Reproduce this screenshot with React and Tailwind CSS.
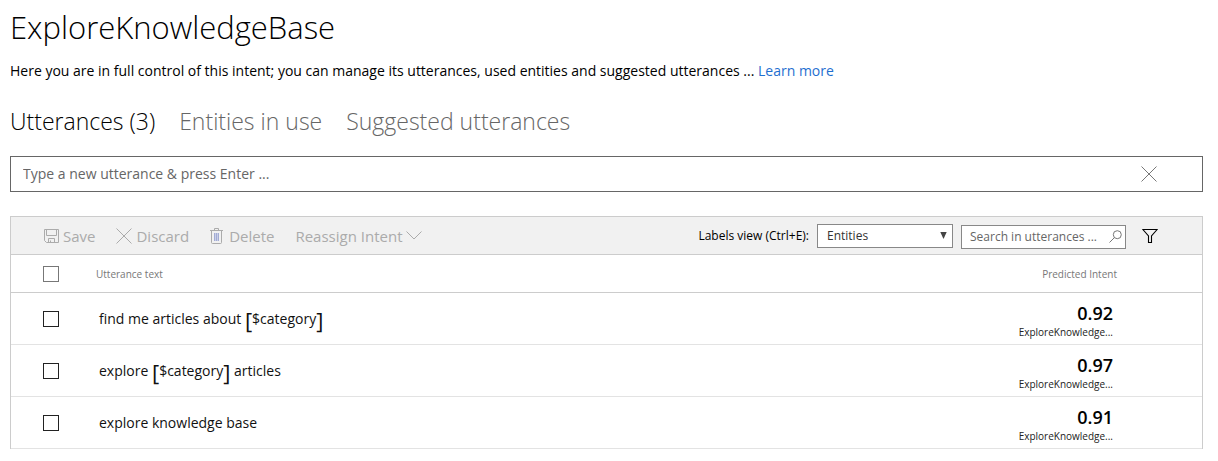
import { useState } from "react";

const rows = [
  { id: 1, before: "find me articles about ", entity: "$category", after: "", score: "0.92" },
  { id: 2, before: "explore ", entity: "$category", after: " articles", score: "0.97" },
  { id: 3, before: "explore knowledge base", entity: "", after: "", score: "0.91" },
];

function CrossIcon() {
  return (
    <svg className="size-4 shrink-0" viewBox="0 0 16 16" fill="none" stroke="currentColor" aria-hidden="true">
      <path d="M.5.5l15 15M15.5.5l-15 15" />
    </svg>
  );
}

function SaveIcon() {
  return (
    <svg className="h-4 w-[15px] shrink-0" viewBox="0 0 15 16" fill="none" stroke="currentColor" aria-hidden="true">
      <path d="M.5 1.5h14v13h-12l-2-2zM2.500 1.500v6h10v-6M4.500 14.500v-4h6v4M6.500 14.500v-2" />
    </svg>
  );
}

function TrashIcon() {
  return (
    <svg className="h-4 w-[13px] shrink-0" viewBox="0 0 13 16" fill="none" stroke="currentColor" aria-hidden="true">
      <path d="M0 2.500h13M4.500 2.500v-2h4v2M1.500 2.500v12q0 1 1 1h8q1 0 1-1v-12" />
      <path d="M4 5h5v8H4z" fill="#c9cfe8" stroke="none" />
      <path d="M4.500 5v8M6.500 5v8M8.500 5v8" stroke="#a3acd4" />
    </svg>
  );
}

function ChevronIcon() {
  return (
    <svg className="h-[9px] w-4 shrink-0" viewBox="0 0 16 9" fill="none" stroke="currentColor" aria-hidden="true">
      <path d="M.5.5L8 8 15.500.5" />
    </svg>
  );
}

function SearchIcon() {
  return (
    <svg className="size-[13px] shrink-0" viewBox="0 0 13 13" fill="none" stroke="currentColor" aria-hidden="true">
      <circle cx="8.300" cy="4.700" r="4" />
      <path d="M5.500 7.500L.5 12.500" />
    </svg>
  );
}

function FilterIcon() {
  return (
    <svg className="size-4 shrink-0" viewBox="0 0 16 16" fill="none" stroke="currentColor" strokeWidth="1.100" aria-hidden="true">
      <path d="M.9 1.500h14.200L9.500 8v6.500h-3V8z" />
    </svg>
  );
}

function Check({ label, tone }) {
  return (
    <input
      type="checkbox"
      aria-label={label}
      className={`block size-4 appearance-none border bg-white checked:bg-neutral-500 ${tone}`}
    />
  );
}

export default function App() {
  const [text, setText] = useState("");
  const [view, setView] = useState("Entities");
  const tool = "flex items-center text-[15px] leading-5 disabled:text-[#ababab]";

  return (
    <main className="bg-white pr-[15px] pb-3 pl-[10px] font-['Open_Sans','Noto_Sans',sans-serif] text-black">
      <h1 className="pt-[3px] text-[31px] leading-[48px] font-light">ExploreKnowledgeBase</h1>
      <p className="mt-[10px] text-[14px] leading-5">
        Here you are in full control of this intent; you can manage its utterances, used entities and suggested utterances ...{" "}
        <a href="#learn" className="text-[#1f6fd0]">Learn more</a>
      </p>
      <nav className="mt-6 flex gap-6 text-[23px] leading-8 font-light">
        <button type="button">Utterances (3)</button>
        <button type="button" className="text-[#666]">Entities in use</button>
        <button type="button" className="text-[#666]">Suggested utterances</button>
      </nav>
      <form className="mt-[19px] flex h-9 items-center border border-[#666] pr-[45px] pl-3" onSubmit={(e) => e.preventDefault()}>
        <input
          aria-label="New utterance"
          className="min-w-0 flex-1 text-[14px] leading-5 outline-none placeholder:text-[#666]"
          placeholder="Type a new utterance & press Enter ..."
          value={text}
          onChange={(e) => setText(e.target.value)}
        />
        <button type="button" aria-label="Clear" className="text-[#777]" onClick={() => setText("")}>
          <CrossIcon />
        </button>
      </form>

      <section className="mt-6 border-x border-t border-[#ccc]">
        <div className="flex items-center justify-between border-b border-[#ccc] bg-[#f1f1f1] pr-11 pl-[33px]">
          <div className="flex items-center gap-[21px]">
            <button type="button" disabled className={`${tool} gap-1`}><SaveIcon />Save</button>
            <button type="button" disabled className={`${tool} gap-1`}><CrossIcon />Discard</button>
            <button type="button" disabled className={`${tool} gap-[6px]`}><TrashIcon />Delete</button>
            <button type="button" disabled className={`${tool} gap-1`}>Reassign Intent<ChevronIcon /></button>
          </div>
          <div className="flex h-[37px] items-center">
            <label htmlFor="view" className="text-[12px] leading-4">Labels view (Ctrl+E):</label>
            <div className="relative ml-2">
              <select
                id="view"
                className="block h-6 w-[136px] appearance-none border border-[#888] bg-white pl-[9px] text-[12px] text-[#333]"
                value={view}
                onChange={(e) => setView(e.target.value)}
              >
                <option>Entities</option>
                <option>Tokens</option>
              </select>
              <svg className="pointer-events-none absolute top-2 right-[6px] h-[7px] w-[7px]" viewBox="0 0 7 7" fill="#444" aria-hidden="true">
                <path d="M.3 0h6.400L3.500 7z" />
              </svg>
            </div>
            <div className="mt-[2px] ml-2 flex h-6 w-[165px] items-center border border-[#888] bg-white pr-[3px] pl-2">
              <input
                type="text"
                aria-label="Search in utterances"
                className="min-w-0 flex-1 text-[12px] outline-none placeholder:text-[#666]"
                placeholder="Search in utterances ..."
              />
              <span className="text-[#777]"><SearchIcon /></span>
            </div>
            <button type="button" aria-label="Filter" className="ml-4"><FilterIcon /></button>
          </div>
        </div>

        <table className="w-full border-collapse">
          <thead>
            <tr className="h-[37px] border-b border-[#ccc] text-[10px] leading-4 text-[#777]">
              <th className="w-[85px] pt-[2px] pl-8"><Check label="Select all" tone="border-[#777]" /></th>
              <th className="pt-[2px] text-left font-normal">Utterance text</th>
              <th className="pt-[2px] pr-[85px] text-right font-normal">Predicted Intent</th>
            </tr>
          </thead>
          <tbody>
            {rows.map((r) => (
              <tr key={r.id} className="h-[52px] border-b border-[#e3e3e3]">
                <td className="pt-[2px] pl-8"><Check label={`Select utterance ${r.id}`} tone="border-[#222]" /></td>
                <td className="pt-[2px] pl-[3px] text-[14px] leading-6 text-[#111]">
                  {r.before}
                  {r.entity && (
                    <>
                      <span className="align-middle text-[22px] leading-5">[</span>
                      {r.entity}
                      <span className="align-middle text-[22px] leading-5">]</span>
                    </>
                  )}
                  {r.after}
                </td>
                <td className="pt-[2px] pr-[89px] text-right">
                  <div className="text-[18px] leading-[26px] font-semibold">{r.score}</div>
                  <div className="text-[10px] leading-3 text-[#222]">ExploreKnowledge...</div>
                </td>
              </tr>
            ))}
          </tbody>
        </table>
      </section>
    </main>
  );
}
